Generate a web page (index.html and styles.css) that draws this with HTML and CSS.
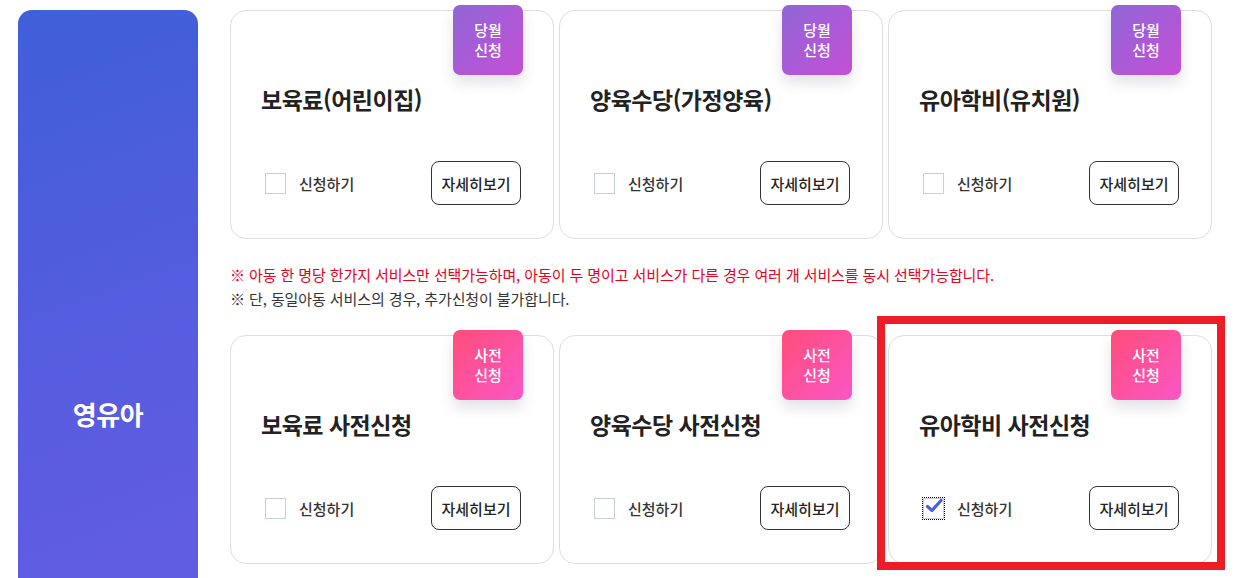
FILE: index.html
```html
<!DOCTYPE html>
<html lang="ko">
<head>
<meta charset="utf-8">
<link rel="stylesheet" href="styles.css">
</head>
<body>
<div class="page">
  <aside class="side"><span class="side-title">영유아</span></aside>
  <main class="content">
    <div class="row">
      <div class="card">
        <div class="badge badge-month">당월<br>신청</div>
        <h3 class="title">보육료(어린이집)</h3>
        <div class="actions">
          <label class="check"><span class="box"></span><span class="check-text">신청하기</span></label>
          <button class="more">자세히보기</button>
        </div>
      </div>
      <div class="card">
        <div class="badge badge-month">당월<br>신청</div>
        <h3 class="title">양육수당(가정양육)</h3>
        <div class="actions">
          <label class="check"><span class="box"></span><span class="check-text">신청하기</span></label>
          <button class="more">자세히보기</button>
        </div>
      </div>
      <div class="card">
        <div class="badge badge-month">당월<br>신청</div>
        <h3 class="title">유아학비(유치원)</h3>
        <div class="actions">
          <label class="check"><span class="box"></span><span class="check-text">신청하기</span></label>
          <button class="more">자세히보기</button>
        </div>
      </div>
    </div>
    <div class="notes">
      <p class="note note-red">※ 아동 한 명당 한가지 서비스만 선택가능하며, 아동이 두 명이고 서비스가 다른 경우 여러 개 서비스를 동시 선택가능합니다.</p>
      <p class="note">※ 단, 동일아동 서비스의 경우, 추가신청이 불가합니다.</p>
    </div>
    <div class="row">
      <div class="card">
        <div class="badge badge-pre">사전<br>신청</div>
        <h3 class="title">보육료 사전신청</h3>
        <div class="actions">
          <label class="check"><span class="box"></span><span class="check-text">신청하기</span></label>
          <button class="more">자세히보기</button>
        </div>
      </div>
      <div class="card">
        <div class="badge badge-pre">사전<br>신청</div>
        <h3 class="title">양육수당 사전신청</h3>
        <div class="actions">
          <label class="check"><span class="box"></span><span class="check-text">신청하기</span></label>
          <button class="more">자세히보기</button>
        </div>
      </div>
      <div class="card card-marked">
        <div class="badge badge-pre">사전<br>신청</div>
        <h3 class="title">유아학비 사전신청</h3>
        <div class="actions">
          <label class="check"><span class="box box-checked"><svg viewBox="0 0 20 20" width="20" height="20"><path d="M3.5 10.5 L8 14.5 L17 4.5" fill="none" stroke="#4a5fe0" stroke-width="3.2" stroke-linecap="round" stroke-linejoin="round"/></svg></span><span class="check-text">신청하기</span></label>
          <button class="more">자세히보기</button>
        </div>
      </div>
    </div>
  </main>
</div>
</body>
</html>
```
FILE: styles.css
```css
* { box-sizing: border-box; }
html, body { margin: 0; padding: 0; }
body {
  background: #fff;
  font-family: "Noto Sans CJK KR", "Noto Sans", sans-serif;
  color: #222;
  overflow: hidden;
  height: 578px;
}
.page {
  display: flex;
  align-items: flex-start;
  padding: 10px 0 0 18px;
  gap: 32px;
}
.side {
  flex: 0 0 180px;
  height: 806px;
  border-radius: 14px;
  background: linear-gradient(160deg, #3f5fd8 0%, #5a5ce0 50%, #6a5ee6 100%);
  display: flex;
  align-items: center;
  justify-content: center;
}
.side-title {
  color: #fff;
  font-size: 26px;
  font-weight: 700;
  letter-spacing: -0.5px;
}
.content {
  display: flex;
  flex-direction: column;
}
.row {
  display: flex;
  gap: 5px;
}
.card {
  position: relative;
  width: 324px;
  height: 229px;
  border: 1px solid #dedede;
  border-radius: 16px;
  background: #fff;
  padding: 0 32px 0 30px;
  display: flex;
  flex-direction: column;
}
.badge {
  position: absolute;
  top: -6px;
  right: 30px;
  width: 70px;
  height: 70px;
  border-radius: 7px;
  color: #fff;
  font-size: 15px;
  font-weight: 500;
  line-height: 20px;
  display: flex;
  align-items: center;
  justify-content: center;
  text-align: center;
  box-shadow: 0 8px 14px rgba(60, 60, 90, 0.14);
}
.badge-month { background: linear-gradient(135deg, #9066d6 0%, #c44fd6 100%); }
.badge-pre { background: linear-gradient(135deg, #ff4d7a 0%, #fb56c6 100%); }
.title {
  margin: 70px 0 0;
  font-size: 23px;
  font-weight: 700;
  line-height: 36px;
  color: #222;
  letter-spacing: -0.5px;
}
.actions {
  margin-top: 44px;
  display: flex;
  align-items: center;
  justify-content: space-between;
}
.check {
  display: flex;
  align-items: center;
  gap: 13px;
  padding-left: 4px;
}
.box {
  width: 21px;
  height: 21px;
  border: 1px solid #c8cde0;
  background: #fff;
  display: block;
  position: relative;
}
.box-checked { outline: 1px dotted #000; outline-offset: 0; }
.box-checked svg { position: absolute; left: 0; top: -3px; }
.check-text {
  font-size: 15px;
  color: #333;
  font-weight: 500;
}
.more {
  width: 90px;
  height: 44px;
  border: 1px solid #333;
  border-radius: 8px;
  background: #fff;
  font-family: inherit;
  font-size: 15px;
  font-weight: 500;
  color: #222;
  padding: 0;
}
.notes {
  margin: 24px 0 24px;
}
.note {
  margin: 0;
  font-size: 15px;
  line-height: 24px;
  color: #333;
  letter-spacing: -0.1px;
}
.note-red { color: #e8001c; }
.card-marked::after {
  content: "";
  position: absolute;
  top: -20px;
  left: -12px;
  right: -14px;
  bottom: -7px;
  border: 8px solid #ee1c25;
  pointer-events: none;
}
```
